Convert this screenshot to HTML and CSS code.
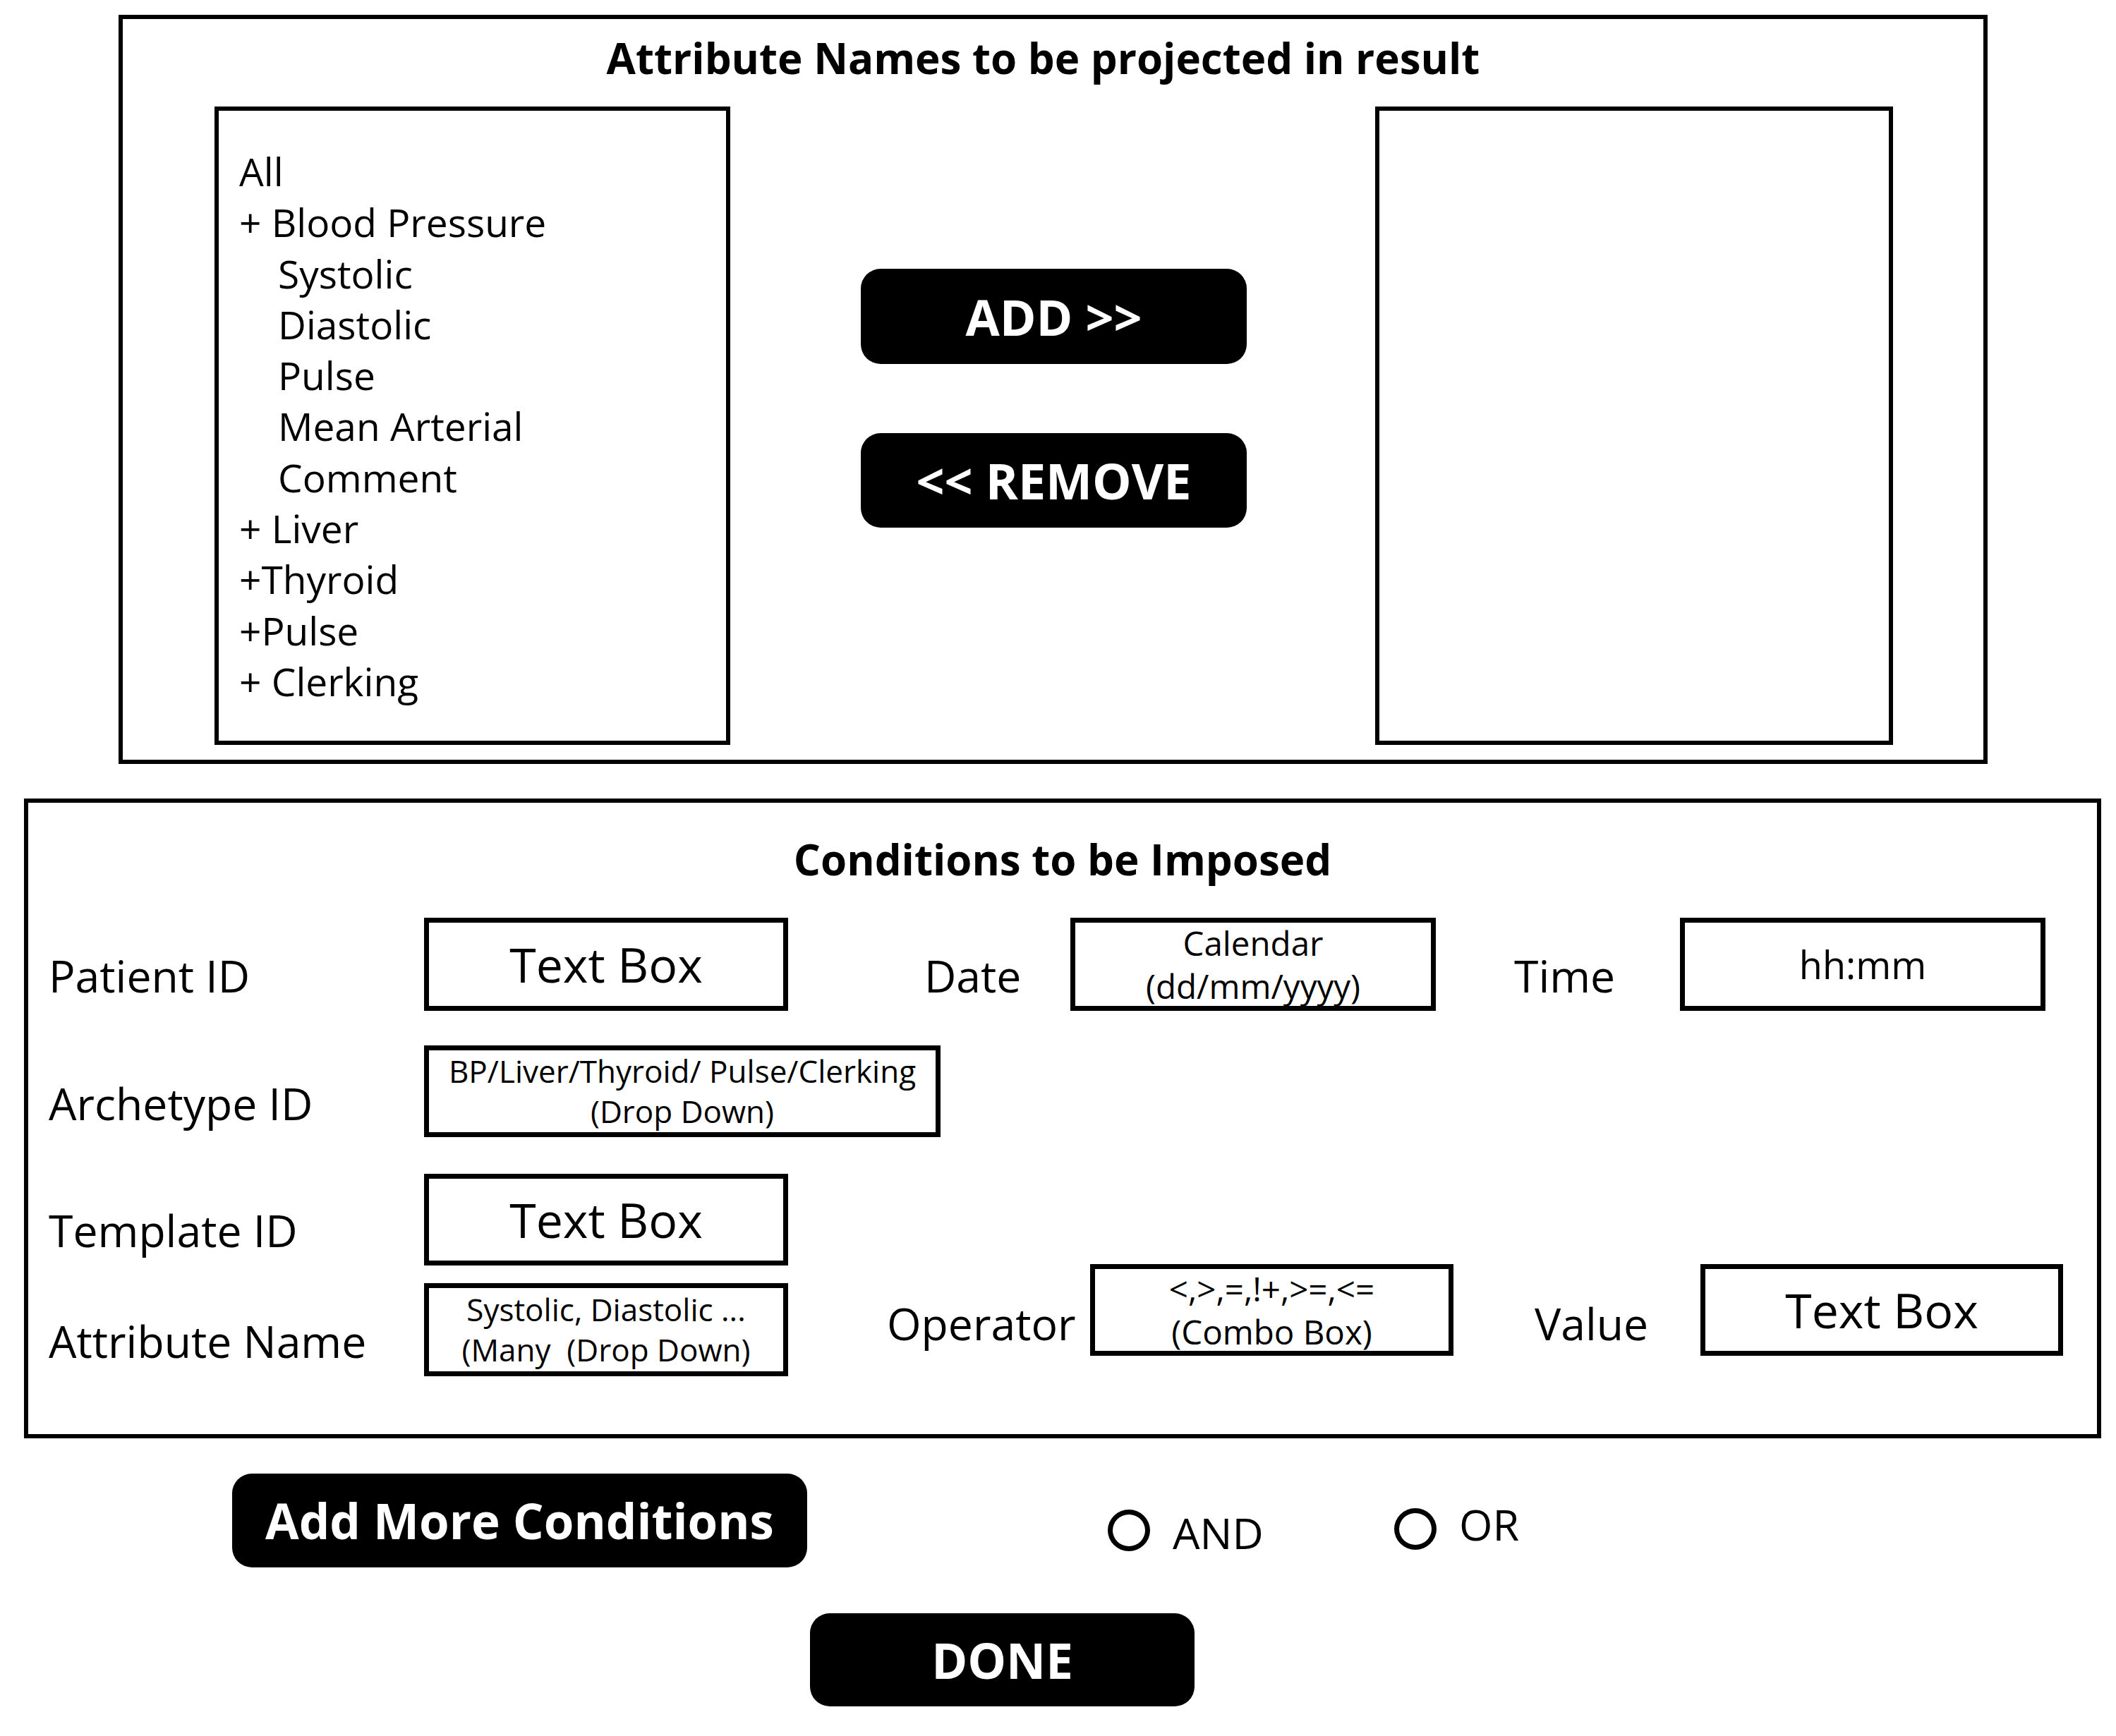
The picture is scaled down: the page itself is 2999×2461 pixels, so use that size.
FILE: index.html
```html
<!DOCTYPE html>
<html lang="en">
<head>
<meta charset="utf-8">
<title>Query Builder</title>
<link rel="stylesheet" href="styles.css">
</head>
<body>
<div class="page">
  <section class="panel attrs">
    <h2 class="title title-attrs">Attribute Names to be projected in result</h2>
    <div class="attrs-row">
      <ul class="list">
        <li>All</li>
        <li>+ Blood Pressure</li>
        <li class="sub">Systolic</li>
        <li class="sub">Diastolic</li>
        <li class="sub">Pulse</li>
        <li class="sub">Mean Arterial</li>
        <li class="sub">Comment</li>
        <li>+ Liver</li>
        <li>+Thyroid</li>
        <li>+Pulse</li>
        <li>+ Clerking</li>
      </ul>
      <div class="mid">
        <button class="btn btn-add">ADD &gt;&gt;</button>
        <button class="btn btn-remove">&lt;&lt; REMOVE</button>
      </div>
      <div class="list list-right"></div>
    </div>
  </section>

  <section class="panel conds">
    <h2 class="title title-conds">Conditions to be Imposed</h2>
    <div class="row row1">
      <span class="lbl lbl-main">Patient ID</span>
      <div class="box box-std big">Text Box</div>
      <span class="lbl lbl-date">Date</span>
      <div class="box box-cal small"><span>Calendar</span><span>(dd/mm/yyyy)</span></div>
      <span class="lbl lbl-time">Time</span>
      <div class="box box-time medium">hh:mm</div>
    </div>
    <div class="row row2">
      <span class="lbl lbl-main">Archetype ID</span>
      <div class="box box-arch small2"><span>BP/Liver/Thyroid/ Pulse/Clerking</span><span>(Drop Down)</span></div>
    </div>
    <div class="row row3">
      <span class="lbl lbl-main">Template ID</span>
      <div class="box box-tpl big">Text Box</div>
    </div>
    <div class="row row4">
      <span class="lbl lbl-main lbl-attr">Attribute Name</span>
      <div class="box box-attr small2"><span>Systolic, Diastolic ...</span><span>(Many&nbsp; (Drop Down)</span></div>
      <span class="lbl lbl-op">Operator</span>
      <div class="box box-combo small"><span>&lt;,&gt;,=,!+,&gt;=,&lt;=</span><span>(Combo Box)</span></div>
      <span class="lbl lbl-val">Value</span>
      <div class="box box-val big">Text Box</div>
    </div>
  </section>

  <div class="actions">
    <button class="btn btn-more">Add More Conditions</button>
    <label class="radio radio-and"><span class="circle"></span><span class="rtext">AND</span></label>
    <label class="radio radio-or"><span class="circle"></span><span class="rtext">OR</span></label>
  </div>
  <div class="done-row">
    <button class="btn btn-done">DONE</button>
  </div>
</div>
</body>
</html>
```
FILE: styles.css
```css
html, body {
  margin: 0;
  padding: 0;
  background: #fff;
}
body {
  font-family: "Open Sans", "Noto Sans", "Liberation Sans", sans-serif;
  color: #000;
}
.page {
  width: 2999px;
  height: 2461px;
  overflow: hidden;
}
.panel {
  box-sizing: border-box;
  border: 6px solid #000;
}
.title {
  margin: 0;
  font-weight: 700;
  font-size: 60px;
  line-height: 70px;
  text-align: center;
}

/* ---------- attributes panel ---------- */
.attrs {
  margin: 21px 0 0 168px;
  width: 2649px;
  height: 1062px;
}
.title-attrs {
  padding: 20px 28px 0 0;
}
.attrs-row {
  display: flex;
  align-items: flex-start;
  margin-top: 34px;
  padding-left: 130px;
}
.list {
  box-sizing: border-box;
  flex: none;
  width: 731px;
  height: 905px;
  border: 6px solid #000;
  margin: 0;
  padding: 50px 0 0 29px;
  list-style: none;
  font-size: 55px;
  line-height: 72.3px;
  white-space: nowrap;
}
.list .sub {
  padding-left: 55px;
}
.list-right {
  width: 734px;
  margin-left: 182px;
  padding: 0;
}
.mid {
  display: flex;
  flex-direction: column;
  margin-left: 185px;
  padding-top: 230px;
  gap: 98px;
}

/* ---------- buttons ---------- */
.btn {
  flex: none;
  display: flex;
  align-items: center;
  justify-content: center;
  box-sizing: border-box;
  padding: 0;
  border: none;
  border-radius: 28px;
  background: #000;
  color: #fff;
  font-family: inherit;
  font-weight: 700;
  font-size: 69px;
  line-height: 1;
  white-space: nowrap;
}
.btn-add {
  width: 547px;
  height: 135px;
  font-size: 70px;
}
.btn-remove {
  width: 547px;
  height: 134px;
  font-size: 70px;
}

/* ---------- conditions panel ---------- */
.conds {
  margin: 49px 0 0 34px;
  width: 2944px;
  height: 907px;
}
.title-conds {
  padding-top: 45px;
}
.row {
  display: flex;
  align-items: flex-start;
  padding-left: 29px;
}
.row1 { margin-top: 48px; height: 132px; }
.row2 { margin-top: 49px; height: 130px; }
.row3 { margin-top: 52px; height: 128px; }
.row4 { margin-top: 0; height: 160px; }

.lbl {
  flex: none;
  font-size: 62.5px;
  line-height: 80px;
  white-space: nowrap;
  margin-top: 42px;
}
.lbl-main { width: 532px; }
.row3 .lbl { margin-top: 40px; }
.lbl-attr { margin-top: 69px; }
.lbl-date { margin-left: 193px; width: 207px; }
.lbl-time { margin-left: 111px; width: 235px; }
.lbl-op { margin-left: 140px; width: 288px; margin-top: 44px; }
.lbl-val { margin-left: 115px; width: 235px; margin-top: 44px; }

.box {
  flex: none;
  box-sizing: border-box;
  border: 7px solid #000;
  display: flex;
  flex-direction: column;
  align-items: center;
  justify-content: center;
  text-align: center;
  white-space: nowrap;
}
.big { font-size: 68px; line-height: 80px; }
.medium { font-size: 54px; line-height: 61px; }
.small { font-size: 47.5px; line-height: 61px; }
.small2 { font-size: 44px; line-height: 57px; }

.box-std { width: 516px; height: 132px; }
.box-cal { width: 518px; height: 132px; }
.box-time { width: 518px; height: 132px; }
.box-arch { width: 732px; height: 130px; }
.box-tpl { width: 516px; height: 130px; }
.box-attr { width: 516px; height: 132px; margin-top: 27px; }
.box-combo { width: 515px; height: 130px; }
.box-val { width: 514px; height: 130px; }

/* ---------- actions ---------- */
.actions {
  display: flex;
  align-items: flex-start;
  margin-top: 50px;
  padding-left: 329px;
  height: 133px;
}
.btn-more {
  width: 815px;
  height: 133px;
}
.radio {
  flex: none;
  display: flex;
  align-items: flex-start;
  font-size: 61px;
  line-height: 80px;
}
.radio-and {
  margin-left: 426px;
  width: 406px;
}
.circle {
  flex: none;
  box-sizing: border-box;
  width: 60px;
  height: 59px;
  border: 7px solid #000;
  border-radius: 50%;
}
.rtext {
  margin-left: 32px;
}
.radio-and .circle { margin-top: 51px; }
.radio-and .rtext { margin-top: 44px; }
.radio-or .circle { margin-top: 49px; }
.radio-or .rtext { margin-top: 32px; }

.done-row {
  display: flex;
  margin-top: 65px;
  padding-left: 1148px;
}
.btn-done {
  width: 545px;
  height: 132px;
}
```
